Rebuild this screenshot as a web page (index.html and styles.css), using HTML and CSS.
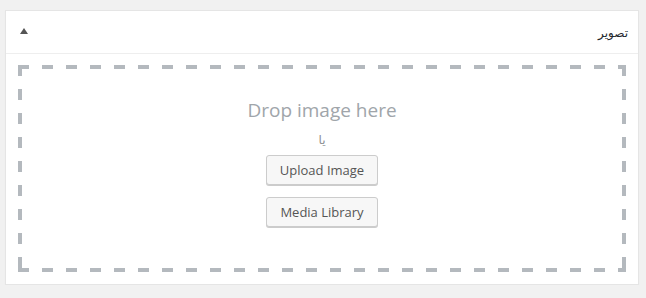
FILE: index.html
```html
<!DOCTYPE html>
<html lang="fa">
<head>
<meta charset="utf-8">
<link rel="stylesheet" href="styles.css">
</head>
<body>
<div class="postbox" dir="rtl">
  <div class="hndle">
    <span class="title">تصویر</span>
    <span class="toggle"></span>
  </div>
  <div class="inside">
    <div class="dropzone" dir="ltr">
      <div class="drop-text">Drop image here</div>
      <div class="or" dir="rtl">یا</div>
      <button class="button upload">Upload Image</button>
      <button class="button library">Media Library</button>
    </div>
  </div>
</div>
</body>
</html>
```

FILE: styles.css
```css
html, body {
  margin: 0;
  padding: 0;
  background: #f1f1f1;
}
body {
  padding: 10px 7px 0 5px;
  font-family: "Open Sans", "Noto Sans", sans-serif;
}
.postbox {
  width: 634px;
  box-sizing: border-box;
  background: #fff;
  border: 1px solid #e5e5e5;
  box-shadow: 0 1px 1px rgba(0,0,0,.04);
}
.hndle {
  height: 42px;
  border-bottom: 1px solid #eee;
  display: flex;
  align-items: center;
  justify-content: space-between;
  padding: 0 10px 0 14px;
}
.title {
  font-family: "DejaVu Sans", "Noto Sans", sans-serif;
  font-size: 12px;
  color: #23282d;
  padding-top: 1px;
}
.toggle {
  width: 0;
  height: 0;
  border-left: 4px solid transparent;
  border-right: 4px solid transparent;
  border-bottom: 6px solid #555;
  margin-top: -2px;
}
.inside {
  padding: 11px 12px 12px;
}
.dropzone {
  height: 207px;
  box-sizing: border-box;
  background:
    repeating-linear-gradient(90deg, #b4b9be 0 11px, transparent 11px 24px) 0 0 / 100% 4px no-repeat,
    repeating-linear-gradient(90deg, #b4b9be 0 11px, transparent 11px 24px) 0 100% / 100% 4px no-repeat,
    repeating-linear-gradient(180deg, #b4b9be 0 11px, transparent 11px 24px) 0 0 / 4px 100% no-repeat,
    repeating-linear-gradient(180deg, #b4b9be 0 11px, transparent 11px 24px) 100% 0 / 4px 100% no-repeat;
  display: flex;
  flex-direction: column;
  align-items: center;
  padding-top: 31px;
}
.drop-text {
  font-size: 19px;
  line-height: 28px;
  color: #a0a5aa;
}
.or {
  margin-top: 6px;
  font-size: 12px;
  line-height: 20px;
  color: #8c8f94;
  font-family: "DejaVu Sans", sans-serif;
}
.button {
  font-family: "Open Sans", "Noto Sans", sans-serif;
  font-size: 13px;
  height: 30px;
  line-height: 28px;
  padding: 0 13px;
  border: 1px solid #ccc;
  border-radius: 3px;
  background: #f7f7f7;
  box-shadow: 0 1px 0 #ccc;
  color: #555;
}
.upload {
  margin-top: 5px;
}
.library {
  margin-top: 12px;
}
```
